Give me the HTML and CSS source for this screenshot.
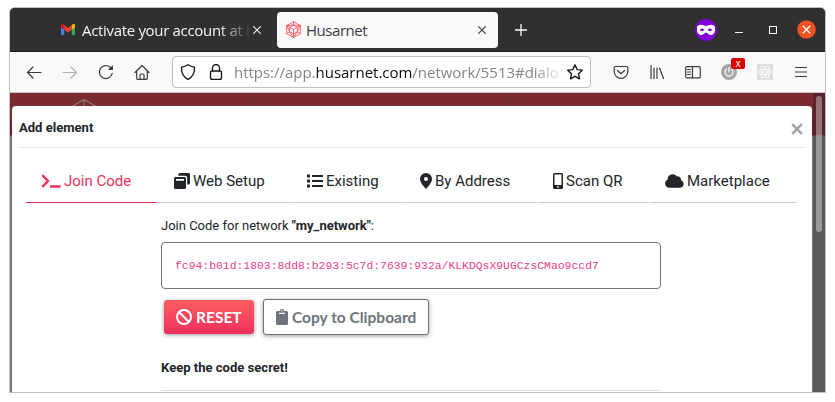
FILE: index.html
```html
<!DOCTYPE html>
<html lang="en">
<head>
<meta charset="utf-8">
<title>Husarnet</title>
<link rel="stylesheet" href="styles.css">
</head>
<body>
<div class="window">
  <header class="tabbar">
    <div class="tab tab-idle">
      <svg class="gmail" width="14" height="11" viewBox="0 0 14 11"><path fill="#4285f4" d="M0 2v8q0 1 1 1h2.200V4.500z"/><path fill="#34a853" d="M14 2v8q0 1-1 1h-2.200V4.500z"/><path fill="#ea4335" d="M3.200 5.800V1L7 3.900 10.800 1v4.800L7 8.600z"/><path fill="#c5221f" d="M0 1.500C0 0 1.500-.3 2.500.5L3.200 1v4.800L0 3.400z"/><path fill="#fbbc04" d="M14 1.500C14 0 12.500-.3 11.500.5l-.7.5v4.800L14 3.400z"/></svg>
      <span class="tab-text fade-tab">Activate your account at h</span>
      <svg class="x" width="8" height="8" viewBox="0 0 8 8"><path d="M.3.300l7.400 7.400M7.700.3L.3 7.700"/></svg>
    </div>
    <div class="tab tab-active">
      <svg class="husar" width="15" height="17" viewBox="0 0 15 17"><path d="M7.500.6l6.800 4v8l-6.800 4-6.800-4v-8zM7.500 4l3.800 2.300v4.500L7.500 13l-3.800-2.200V6.300zM3.700 6.300l3.800 2.200 3.800-2.200M7.500 8.500V16M.7 4.600L3.700 6.300M14.300 4.600l-3 1.700M7.500.6V4M3.700 10.800l-3 1.800M11.300 10.800l3 1.800M.7 4.600L7.500 4l6.800.6-3 6.200-3.800 5.800-3.800-5.800z"/></svg>
      <span class="tab-text">Husarnet</span>
      <svg class="x" width="8" height="8" viewBox="0 0 8 8"><path d="M.3.300l7.400 7.400M7.700.3L.3 7.700"/></svg>
    </div>
    <svg class="plus" width="12" height="12" viewBox="0 0 12 12"><path d="M6 0v12M0 6h12"/></svg>
    <svg class="mask" width="22" height="22" viewBox="0 0 22 22"><circle cx="11" cy="11" r="11" fill="#8000d7"/><path fill="#fff" fill-rule="evenodd" d="M2 8.500C2 6 6 5 8.500 6.300Q11 7.600 13.500 6.300C16 5 20 6 20 8.500v2.200C20 14 18 16 15.500 16 13 16 12.500 13.500 11 13.500S9 16 6.500 16C4 16 2 14 2 10.700zM4.800 11q2.500 2.300 4.600 0-2.300-2.800-4.600 0zM12.600 11q2.500 2.300 4.600 0-2.300-2.800-4.600 0z"/></svg>
    <span class="minimize"></span>
    <span class="maximize"></span>
    <svg class="quit" width="19" height="19" viewBox="0 0 19 19"><circle cx="9.500" cy="9.500" r="9.300" fill="#e95420"/><path stroke="#fff" stroke-width="1.300" d="M5.800 5.800l7.400 7.400M13.200 5.800l-7.400 7.400"/></svg>
  </header>
  <nav class="toolbar">
    <span class="tool"><svg width="16" height="16" viewBox="0 0 16 16"><path d="M15 8.500H1.500M7 3L1.500 8.500 7 14"/></svg></span>
    <span class="tool disabled"><svg width="16" height="16" viewBox="0 0 16 16"><path d="M1 8.500h13.500M9 3l5.500 5.500L9 14"/></svg></span>
    <span class="tool"><svg width="16" height="16" viewBox="0 0 16 16"><path d="M14.200 9.300A6.500 6.500 0 1 1 12.500 3.500L14 5"/><path class="solid" d="M14.900 1v5H10z"/></svg></span>
    <span class="tool"><svg width="16" height="16" viewBox="0 0 16 16"><path d="M1 8.500L8 1.500l7 7M2.700 7v7.300q0 1 1 1h8.600q1 0 1-1V7M6 15v-4q0-1 1-1h2q1 0 1 1v4"/></svg></span>
    <div class="urlbar">
      <span class="urlicon"><svg width="16" height="16" viewBox="0 0 16 16"><path d="M8 .8Q10.800 2.600 14.500 3.200C14.800 9 12.500 13 8 15.300 3.500 13 1.200 9 1.500 3.200Q5.200 2.600 8 .8z"/></svg></span>
      <span class="urlicon"><svg width="16" height="16" viewBox="0 0 16 16"><path d="M4.500 7V4a3.500 3.500 0 0 1 7 0v3M4 7h8q1.500 0 1.500 1.500V14q0 1.500-1.500 1.500H4q-1.500 0-1.500-1.500V8.500Q2.500 7 4 7z"/></svg></span>
      <span class="url">https://app.<b>husarnet.com</b>/network/5513#dialo</span>
      <span class="urlicon"><svg width="16" height="16" viewBox="0 0 16 16"><path d="M8 .9l2.200 4.700 5.100.6-3.800 3.500 1 5.100L8 12.300l-4.500 2.500 1-5.100L.7 6.200l5.100-.6z"/></svg></span>
    </div>
    <span class="tool"><svg width="16" height="16" viewBox="0 0 16 16"><path d="M2.500 2.500h11q1.300 0 1.300 1.300V7.500a6.800 6.800 0 0 1-13.600 0V3.800q0-1.300 1.300-1.300zM4.500 6.500L8 9.800l3.500-3.300"/></svg></span>
    <span class="tool"><svg width="16" height="16" viewBox="0 0 16 16"><path d="M2 1.500v13M5 4v10.500M8 4v10.500M10.500 4L14.500 14.500"/></svg></span>
    <span class="tool"><svg width="16" height="16" viewBox="0 0 16 16"><path d="M2 2.600h12q1.300 0 1.300 1.300v8.600q0 1.300-1.300 1.300H2q-1.300 0-1.300-1.300V3.900q0-1.300 1.300-1.300zM7.500 2.600v11.200M2.500 5.500h3M2.500 8h3M2.500 10.500h3"/></svg></span>
    <span class="tool power"><svg width="16" height="16" viewBox="0 0 16 16"><circle class="disc" cx="8" cy="8" r="8"/><path class="white" d="M5.500 5a4 4 0 1 0 5 0M8 3.500v4.500"/></svg><i class="badge">x</i></span>
    <span class="tool"><svg width="16" height="16" viewBox="0 0 16 16"><path class="tile" d="M0 0h16v16H0z"/><g class="atom"><ellipse cx="8" cy="8" rx="6.500" ry="2.600"/><ellipse cx="8" cy="8" rx="6.500" ry="2.600" transform="rotate(60 8 8)"/><ellipse cx="8" cy="8" rx="6.500" ry="2.600" transform="rotate(120 8 8)"/><circle cx="8" cy="8" r=".8"/></g></svg></span>
    <span class="tool"><svg width="16" height="16" viewBox="0 0 16 16"><path d="M2.500 3.500h11M2.500 8h11M2.500 12.500h11"/></svg></span>
  </nav>
  <main class="page">
    <svg class="logo" width="30" height="20" viewBox="0 0 30 20"><path d="M1 9L14 1.500 27 9M14 1.500V12"/></svg>
    <span class="ghost"></span>
    <span class="track"><span class="thumb"></span></span>
    <section class="modal">
      <div class="modal-head">
        <h1>Add element</h1>
        <svg width="12" height="12" viewBox="0 0 12 12"><path d="M1.200 1.200l9.600 9.600M10.800 1.200l-9.600 9.600"/></svg>
      </div>
      <div class="tabs">
        <span class="item current"><svg width="20" height="16" viewBox="0 0 20 16"><path fill="none" stroke="currentColor" stroke-width="2.400" d="M1.300 2.200L7 8l-5.700 5.800M9 13.500h10.500"/></svg>Join Code</span>
        <span class="item"><svg width="16" height="16" viewBox="0 0 16 16"><path d="M6 0h8.500Q16 0 16 1.500V10q0 1.500-1.500 1.500H13.200V5Q13.200 2.800 11 2.800H4.300V1.500Q4.300 0 6 0z"/><path fill-rule="evenodd" d="M1.500 4h9Q12 4 12 5.500v9q0 1.500-1.500 1.500h-9Q0 16 0 14.500v-9Q0 4 1.500 4zM2 6v1.700h8V6z"/></svg>Web Setup</span>
        <span class="item"><svg width="16" height="16" viewBox="0 0 16 16"><path d="M0 1.500h3v3H0zM0 6.500h3v3H0zM0 11.500h3v3H0zM5 2h11v2H5zM5 7h11v2H5zM5 12h11v2H5z"/></svg>Existing</span>
        <span class="item"><svg width="12" height="16" viewBox="0 0 12 16"><path fill-rule="evenodd" d="M6 0a6 6 0 0 1 6 6c0 3-3.500 7.500-6 10C3.500 13.500 0 9 0 6a6 6 0 0 1 6-6zm0 4a2 2 0 1 0 0 4 2 2 0 0 0 0-4z"/></svg>By Address</span>
        <span class="item"><svg width="10" height="16" viewBox="0 0 10 16"><path fill-rule="evenodd" d="M1.500 0h7Q10 0 10 1.500v13Q10 16 8.500 16h-7Q0 16 0 14.500v-13Q0 0 1.500 0zM1.500 1.500V12h7V1.500zM4.200 13.300v1.400h1.600v-1.400z"/></svg>Scan QR</span>
        <span class="item"><svg width="19" height="16" viewBox="0 0 20 16"><path d="M4.500 15A4.500 4.500 0 0 1 2.800 6.400 5.300 5.300 0 0 1 12.500 3.200 3.500 3.500 0 0 1 16.800 7.200 4 4 0 0 1 16 15z"/></svg>Marketplace</span>
      </div>
      <div class="content">
        <p class="lead">Join Code for network <b>"my_network"</b>:</p>
        <code>fc94:b01d:1803:8dd8:b293:5c7d:7639:932a/KLKDQsX9UGCzsCMao9ccd7</code>
        <div class="buttons">
          <button class="reset"><svg width="16" height="16" viewBox="0 0 16 16"><path d="M8 1a7 7 0 1 0 0 14A7 7 0 0 0 8 1zM3 3l10 10"/></svg>RESET</button>
          <button class="copy"><svg width="12" height="16" viewBox="0 0 12 16"><path fill-rule="evenodd" d="M4 2a2 2 0 0 1 4 0h2.500Q12 2 12 3.500v11q0 1.500-1.500 1.500h-9Q0 16 0 14.500v-11Q0 2 1.500 2zM6 1.300a.7.7 0 1 0 0 1.400.7.7 0 0 0 0-1.400zM3 3.800v1.200h6V3.800z"/></svg>Copy to Clipboard</button>
        </div>
        <h2>Keep the code secret!</h2>
      </div>
    </section>
  </main>
</div>
</body>
</html>
```

FILE: styles.css
```css
* { box-sizing: border-box; }
body { margin: 0; padding: 7px 9px 0; height: 402px; overflow: hidden; background: #fff; }
svg { display: block; flex: none; }
.window { width: 817px; height: 386px; border: 1px solid #bfbfbf; border-radius: 6px 6px 0 0; overflow: hidden; background: #322f30; }

.tabbar { height: 44px; display: flex; align-items: center; background: #322f30; border-bottom: 1px solid #1f1d1e; color: #f5f5f5; font: 15px/20px "Open Sans", sans-serif; }
.tab { display: flex; align-items: center; }
.tab-text { white-space: nowrap; overflow: hidden; }
.tab .x { fill: none; stroke: currentColor; stroke-width: 1.1; }
.tab-idle { width: 267px; padding-left: 51px; }
.fade-tab { width: 170px; margin: 0 1px 0 7px; letter-spacing: -.32px; -webkit-mask-image: linear-gradient(90deg, #000 136px, transparent 170px); mask-image: linear-gradient(90deg, #000 136px, transparent 170px); }
.tab-active { width: 221px; height: 36px; padding: 0 12px 0 9px; background: #f9f9f9; border-radius: 4px; color: #3b3b3f; }
.tab-active .tab-text { margin-left: 5px; flex: 1; letter-spacing: -.45px; }
.husar { fill: none; stroke: #fb4b58; stroke-width: .85; }
.plus { margin-left: 17px; stroke: #fff; stroke-width: 1.3; }
.mask { margin-left: 168px; }
.minimize { width: 8px; height: 1px; margin: 5px 0 0 18px; background: #fff; }
.maximize { width: 8px; height: 8px; margin-left: 26px; border: 1px solid #fff; }
.quit { margin-left: 20px; fill: none; }

.toolbar { height: 41px; padding-left: 6px; display: flex; align-items: center; background: #f9f9fa; border-bottom: 1px solid #c6c6c6; }
.tool { width: 36px; height: 32px; flex: none; display: flex; align-items: center; justify-content: center; position: relative; }
.tool svg, .urlicon svg { fill: none; stroke: #3b3b3f; stroke-width: 1.2; stroke-linecap: round; stroke-linejoin: round; }
.tool svg .solid { fill: #3b3b3f; stroke: none; }
.disabled svg { stroke: #b0b0b2; }
.urlbar { width: 419px; height: 32px; margin: 0 12px; display: flex; align-items: center; background: #fff; border: 1px solid #bdbdbe; border-radius: 4px; }
.urlicon { width: 28px; flex: none; display: flex; justify-content: center; }
.urlicon svg { stroke: #151518; stroke-width: 1.35; }
.urlicon:first-child { margin-left: 1px; }
.url { width: 327px; margin-left: 4px; white-space: nowrap; overflow: hidden; color: #858587; font: 15px/22px "Open Sans", sans-serif; letter-spacing: -.02px; -webkit-mask-image: linear-gradient(90deg, #000 300px, transparent 330px); mask-image: linear-gradient(90deg, #000 300px, transparent 330px); }
.url b { font-weight: 400; color: #0c0c0d; }
.tool svg .disc { fill: #a5a5a5; stroke: none; }
.tool svg .white { stroke: #fff; }
.badge { position: absolute; left: 20px; top: 2px; width: 14px; height: 11px; border-radius: 2px; background: #d90000; color: #fff; font: 10px/10px "Open Sans", sans-serif; text-align: center; }
.tool svg .tile { fill: #dedede; stroke: none; }
.tool svg .atom { stroke: #fff; stroke-width: .8; }

.page { height: 299px; position: relative; padding: 13px 0 0 2px; overflow: hidden; background: linear-gradient(#7c2c30 0, #77292f 20px, #6e1b30 42px, #777 43px); }
.logo { position: absolute; left: 60px; top: 5px; fill: none; stroke: #8f7c7e; stroke-width: 1.2; }
.ghost { position: absolute; left: 717px; top: 3px; width: 48px; height: 34px; border: 1px solid #702a2f; border-radius: 2px; }
.track { position: absolute; right: 0; top: 0; width: 12px; height: 299px; padding: 3px 3px 0; background: linear-gradient(#5c2328 0, #57202a 42px, #59595b 43px); }
.thumb { display: block; width: 6px; height: 136px; border-radius: 3px; background: linear-gradient(#967377 0, #967377 38px, #999 40px); }
.modal { position: relative; width: 800px; height: 290px; padding: 0 7px; background: #fff; border-radius: 4px 4px 0 0; color: #212529; font-family: Roboto, sans-serif; }
.modal-head { height: 42px; width: 786px; padding-right: 2px; display: flex; align-items: center; justify-content: space-between; border-bottom: 1px solid #e9ecef; }
.modal-head svg { margin-top: 4px; stroke: #a3a3a3; stroke-width: 2.5; }
h1, h2 { margin: 0; font-size: 13.05px; line-height: 20px; font-weight: 700; }
h1 { padding-top: 2px; }
.tabs { margin: 11px 0 0 7px; display: grid; grid-template-columns: 131px 132px 112px 132px 111px 147px; gap: 1px; width: 771px; }
.item { height: 44px; padding-left: 16px; display: flex; align-items: center; gap: 3px; border-bottom: 1px solid #ccc; font-size: 15px; white-space: nowrap; }
.item svg { fill: currentColor; }
.current { padding-left: 15px; color: #ee2f5d; border-color: #ee2f5d; }
.content { width: 500px; margin-left: 142px; }
.lead { margin: 13px 0 6px; font-size: 13px; line-height: 20px; }
code { display: block; height: 47px; padding: 0 13px; border: 1px solid #6c757d; border-radius: 4px; color: #e83e8c; font: 11.4px/47px "Liberation Mono", monospace; }
.buttons { display: flex; gap: 9px; align-items: center; margin: 10px 0 0 3px; }
button { display: flex; align-items: center; gap: 4px; margin: 0; padding: 0 12px; border-radius: 3px; font: 700 15.5px/20px Lato, sans-serif; white-space: nowrap; box-shadow: 0 1px 4px rgba(0,0,0,.4); }
.reset { width: 90px; height: 34px; border: 0; color: #fff; background: linear-gradient(#fd5f61, #ee2f5d); }
.reset svg { fill: none; stroke: #fff; stroke-width: 2; }
.copy { width: 166px; height: 36px; border: 1px solid #6c757d; color: #6c757d; background: #fff; }
.copy svg { fill: currentColor; }
h2 { margin-top: 23px; padding-bottom: 12px; border-bottom: 1px solid #dedfe0; }
```
